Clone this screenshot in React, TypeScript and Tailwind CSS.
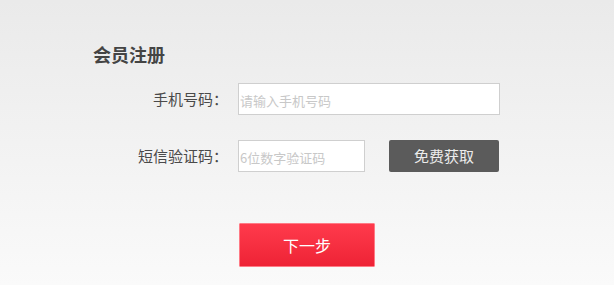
export default function App() {
    const font = { fontFamily: '"Microsoft YaHei", "Noto Sans CJK SC", sans-serif' }

    return (
        <div
            className="w-full h-[285px] bg-gradient-to-b from-[#eaeaea] to-[#fafafa] pt-[41px] pl-[93px]"
            style={font}
        >
            <h2 className="text-[18px] leading-[26px] font-bold text-[#444]">会员注册</h2>

            <div className="mt-[16px] flex items-center">
                <label className="w-[135px] text-right text-[15px] text-[#4a4a4a]">手机号码：</label>
                <input
                    type="text"
                    placeholder="请输入手机号码"
                    className="ml-[10px] w-[262px] h-[32px] bg-white border border-[#cfcfcf] px-[1px] pt-[2px] text-[13px] placeholder:text-[#c8c8c8] outline-none"
                />
            </div>

            <div className="mt-[25px] flex items-center">
                <label className="w-[135px] text-right text-[15px] text-[#4a4a4a]">短信验证码：</label>
                <input
                    type="text"
                    placeholder="6位数字验证码"
                    className="ml-[10px] w-[127px] h-[32px] bg-white border border-[#cfcfcf] px-[1px] pt-[2px] text-[13px] placeholder:text-[#c8c8c8] outline-none"
                />
                <button className="ml-[24px] w-[110px] h-[32px] rounded-[2px] bg-[#5b5b5b] text-[15px] text-[#ececec]">
                    免费获取
                </button>
            </div>

            <div className="mt-[51px] pl-[146px]">
                <button className="w-[136px] h-[44px] rounded-[1px] border border-[#ff7a85] bg-gradient-to-b from-[#ff3a4c] to-[#ee2235] text-[16px] text-white">
                    下一步
                </button>
            </div>
        </div>
    )
}
